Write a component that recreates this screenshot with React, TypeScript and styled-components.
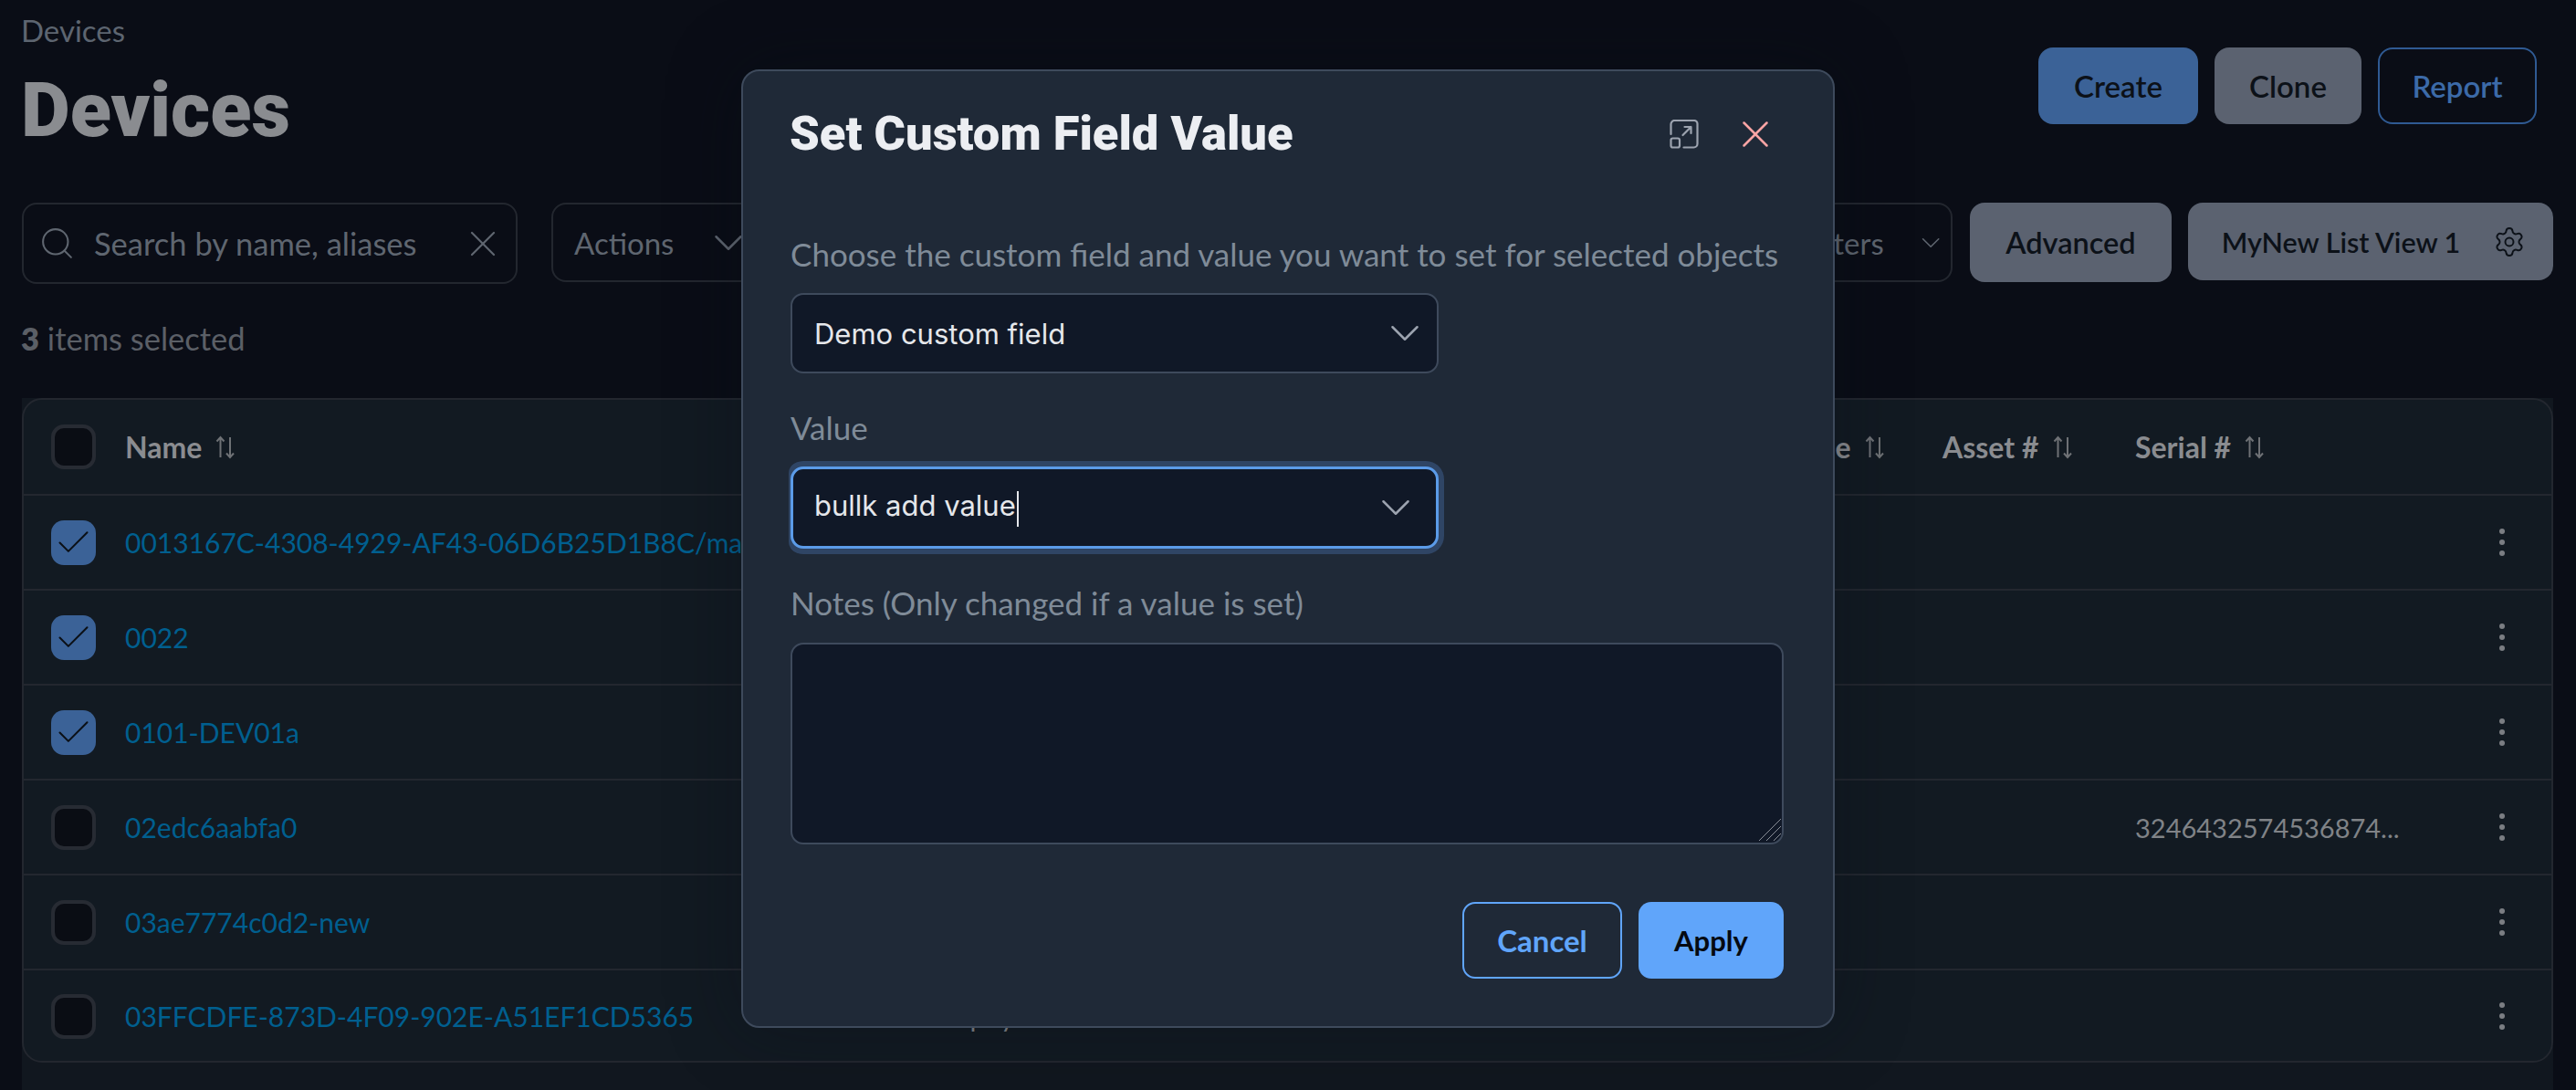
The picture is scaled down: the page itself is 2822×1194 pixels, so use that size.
import React from "react";
import styled, { createGlobalStyle } from "styled-components";
import { ChevronDown, Search, X, Settings, Check } from "lucide-react";

const Global = createGlobalStyle`
  html, body { margin: 0; padding: 0; height: 100%; background: #0a0d16; overflow: hidden; }
  body { font-family: "Inter", "Liberation Sans", sans-serif; }
  * { box-sizing: border-box; }
`;

const Page = styled.div`
  width: 2822px;
  height: 1194px;
  padding-left: 24px;
  padding-right: 25px;
  display: flex;
  flex-direction: column;
  position: relative;
  overflow: hidden;
  background: #0a0d16;
`;
const TopBar = styled.header`
  height: 222px;
  flex: none;
  display: flex;
  justify-content: space-between;
  align-items: flex-start;
`;
const TitleBlock = styled.div`
  display: flex;
  flex-direction: column;
`;
const Crumb = styled.div`
  font-family: "Lato", sans-serif;
  font-size: 33px;
  line-height: 36px;
  margin-top: 15px;
  margin-left: -1px;
  color: #5d6570;
`;
const PageTitle = styled.h1`
  font-family: "Roboto", sans-serif;
  font-weight: 900;
  font-size: 83px;
  line-height: 96px;
  margin: 22px 0 0 -1px;
  color: #8a8c90;
`;
const TopActions = styled.div`
  display: flex;
  gap: 18px;
  padding-top: 52px;
  padding-right: 18px;
`;
const TopButton = styled.button<{ $w: number; $kind: "primary" | "muted" | "outline" }>`
  width: ${(p) => p.$w}px;
  height: 84px;
  border-radius: 16px;
  font-family: "Lato", sans-serif;
  font-size: 33px;
  font-weight: 600;
  background: ${(p) => (p.$kind === "primary" ? "#3b6297" : p.$kind === "muted" ? "#5b6270" : "transparent")};
  color: ${(p) => (p.$kind === "outline" ? "#3c6aa8" : "#0c1118")};
  border: ${(p) => (p.$kind === "outline" ? "2px solid #2f5a93" : "none")};
`;
const Toolbar = styled.div`
  height: 89px;
  flex: none;
  display: flex;
  align-items: flex-start;
`;
const SearchBox = styled.div`
  width: 543px;
  height: 89px;
  border: 2px solid #23272f;
  border-radius: 16px;
  display: flex;
  align-items: center;
  padding: 0 12px 0 16px;
  color: #5f6670;
`;
const SearchText = styled.span`
  flex: 1;
  margin-left: 20px;
  font-family: "Lato", sans-serif;
  font-size: 34.5px;
  color: #5f6670;
  white-space: nowrap;
`;
const Dropdown = styled.div<{ $w: number }>`
  width: ${(p) => p.$w}px;
  height: 87px;
  border: 2px solid #23272f;
  border-radius: 16px;
  display: flex;
  align-items: center;
  padding: 0 5px 0 23px;
  font-family: "Lato", sans-serif;
  font-size: 33px;
  color: #5f6670;
`;
const ActionsBox = styled(Dropdown)`
  margin-left: 37px;
  gap: 33px;
`;
const FiltersBox = styled(Dropdown)`
  margin-left: auto;
  justify-content: flex-end;
  gap: 34px;
`;
const GrayButton = styled.button<{ $w: number; $h: number; $ml: number }>`
  width: ${(p) => p.$w}px;
  height: ${(p) => p.$h}px;
  margin-left: ${(p) => p.$ml}px;
  border: none;
  border-radius: 16px;
  background: #5b6270;
  color: #0c1118;
  font-family: "Lato", sans-serif;
  font-weight: 600;
  font-size: 32.5px;
  display: flex;
  align-items: center;
  justify-content: center;
  flex: none;
`;
const ViewButton = styled(GrayButton)`
  font-size: 30.5px;
  gap: 36px;
  padding-left: 13px;
`;
const Selected = styled.div`
  height: 125px;
  flex: none;
  padding-top: 40px;
  font-family: "Lato", sans-serif;
  font-size: 34.5px;
  line-height: 40px;
  color: #5b5f66;
  margin-left: -1px;
  b { font-weight: 800; }
`;
const Lower = styled.section`
  flex: 1;
  background: #11171f;
`;
const Table = styled.div`
  border: 2px solid #23272f;
  border-radius: 22px;
  background: #121a22;
  height: 728px;
  overflow: hidden;
`;
const Row = styled.div<{ $h: number; $last?: boolean }>`
  height: ${(p) => p.$h}px;
  display: grid;
  grid-template-columns: 81px 888px 934px 169px 211px 372px 60px;
  align-items: center;
  padding-left: 30px;
  border-bottom: ${(p) => (p.$last ? "none" : "2px solid #23272f")};
  font-family: "Lato", sans-serif;
  font-size: 30px;
  color: #808387;
`;
const Box = styled.div<{ $on?: boolean }>`
  width: 49px;
  height: 49px;
  border-radius: 14px;
  background: ${(p) => (p.$on ? "#3b6297" : "#0a0d14")};
  border: ${(p) => (p.$on ? "none" : "4px solid #272b33")};
  display: flex;
  align-items: center;
  justify-content: center;
  color: #0b1016;
`;
const HeadCell = styled.div`
  display: flex;
  align-items: center;
  gap: 15px;
  font-size: 32px;
  font-weight: 700;
  color: #8a8c90;
  white-space: nowrap;
`;
const NameLink = styled.div`
  color: #005f8f;
  white-space: nowrap;
`;
const Plain = styled.div`
  white-space: nowrap;
`;
const Serial = styled(Plain)`
  font-size: 29px;
`;
const Hidden = styled(Plain)`
  letter-spacing: 3px;
  margin-left: -10px;
`;
const Kebab = styled.div`
  justify-self: center;
  display: flex;
  flex-direction: column;
  gap: 6px;
  i {
    display: block;
    width: 6px;
    height: 6px;
    border-radius: 50%;
    background: #7b7e83;
  }
`;

const Layer = styled.div`
  position: absolute;
  inset: 0;
  display: flex;
  justify-content: center;
  align-items: flex-start;
  padding-top: 76px;
`;
const Modal = styled.div`
  width: 1198px;
  height: 1050px;
  background: #1f2937;
  border: 2px solid #3e4a5c;
  border-radius: 20px;
  padding: 0 54px 0 52px;
  display: flex;
  flex-direction: column;
  box-shadow: 0 0 80px rgba(10, 14, 22, 0.35);
`;
const ModalHead = styled.div`
  height: 118px;
  flex: none;
  padding-top: 20px;
  display: flex;
  align-items: center;
  justify-content: space-between;
`;
const ModalTitle = styled.h2`
  margin: -3px 0 0 -1px;
  font-family: "Roboto", sans-serif;
  font-weight: 900;
  font-size: 52.5px;
  color: #eceef2;
`;
const HeadIcons = styled.div`
  display: flex;
  align-items: center;
  gap: 37px;
  margin-right: 6px;
  color: #9ca3af;
`;
const Label = styled.div<{ $mt: number; $mb?: number }>`
  font-family: "Lato", sans-serif;
  font-size: 35px;
  line-height: 40px;
  color: #7f8b98;
  margin-top: ${(p) => p.$mt}px;
  margin-bottom: ${(p) => p.$mb ?? 0}px;
  white-space: nowrap;
`;
const SelectBox = styled.div<{ $focus?: boolean }>`
  width: 710px;
  height: ${(p) => (p.$focus ? 90 : 88)}px;
  flex: none;
  background: #101827;
  border: ${(p) => (p.$focus ? "3px solid #5b9be8" : "2px solid #3e4a5c")};
  border-radius: 14px;
  display: flex;
  align-items: center;
  justify-content: space-between;
  padding: 0 ${(p) => (p.$focus ? 17 : 8)}px 0 ${(p) => (p.$focus ? 23 : 24)}px;
  font-family: "Inter", sans-serif;
  font-size: 31px;
  color: #e5e7eb;
  margin-top: ${(p) => (p.$focus ? 21 : 23)}px;
  ${(p) => (p.$focus ? "box-shadow: 0 0 0 6px #2f4565; clip-path: inset(-6px -6px -6px -2px round 14px);" : "")}
`;
const Caret = styled.span`
  display: inline-block;
  width: 2px;
  height: 39px;
  background: #e5e7eb;
  vertical-align: middle;
  margin-left: 1px;
`;
const NotesWrap = styled.div`
  position: relative;
  width: 1088px;
  height: 221px;
  margin-top: 22px;
  flex: none;
`;
const Notes = styled.textarea`
  display: block;
  width: 100%;
  height: 100%;
  background: #101827;
  border: 2px solid #3e4a5c;
  border-radius: 14px;
  outline: none;
  resize: none;
`;
const Grip = styled.svg`
  position: absolute;
  right: 2px;
  bottom: 3px;
`;
const Footer = styled.div`
  display: flex;
  justify-content: flex-end;
  gap: 18px;
  margin-top: 63px;
  width: 1088px;
`;
const FootButton = styled.button<{ $w: number; $solid?: boolean }>`
  width: ${(p) => p.$w}px;
  height: 84px;
  border-radius: 14px;
  font-family: "Lato", sans-serif;
  font-weight: 700;
  font-size: ${(p) => (p.$solid ? 31 : 33)}px;
  background: ${(p) => (p.$solid ? "#60a5fa" : "transparent")};
  color: ${(p) => (p.$solid ? "#050a12" : "#60a5fa")};
  border: ${(p) => (p.$solid ? "none" : "2px solid #60a5fa")};
`;

const Sort = () => (
  <svg width="22" height="26" viewBox="0 0 22 26" fill="none" stroke="#6e7175" strokeWidth="2">
    <path d="M5.500 24V2M1.500 6.500L5.500 2L9.500 6.500" />
    <path d="M16 2V24M12 19.500L16 24L20 19.500" />
  </svg>
);
const Expand = () => (
  <svg width="32" height="32" viewBox="0 0 32 32" fill="none" stroke="#9ca3af" strokeWidth="2.200" strokeLinecap="round" strokeLinejoin="round">
    <path d="M1.500 16V5a4 4 0 0 1 4-4H27a3.500 3.500 0 0 1 3.500 3.500V26.500a4 4 0 0 1-4 4H15.500" />
    <rect x="1.500" y="20.500" width="9.500" height="10" rx="2" />
    <path d="M14.500 17L23.500 8M16.500 8H23.500V15" />
  </svg>
);
const Dots = () => (
  <Kebab>
    <i />
    <i />
    <i />
  </Kebab>
);

const rows = [
  { name: "0013167C-4308-4929-AF43-06D6B25D1B8C/macbook-pro", on: true },
  { name: "0022", on: true },
  { name: "0101-DEV01a", on: true },
  { name: "02edc6aabfa0", on: false, serial: "3246432574536874..." },
  { name: "03ae7774c0d2-new", on: false },
  { name: "03FFCDFE-873D-4F09-902E-A51EF1CD5365", on: false, mid: "Empty" },
];

export default function App() {
  return (
    <Page>
      <Global />
      <TopBar>
        <TitleBlock>
          <Crumb>Devices</Crumb>
          <PageTitle>Devices</PageTitle>
        </TitleBlock>
        <TopActions>
          <TopButton $w={175} $kind="primary">Create</TopButton>
          <TopButton $w={161} $kind="muted">Clone</TopButton>
          <TopButton $w={174} $kind="outline">Report</TopButton>
        </TopActions>
      </TopBar>
      <Toolbar>
        <SearchBox>
          <Search size={41} strokeWidth={1.2} />
          <SearchText>Search by name, aliases</SearchText>
          <X size={48} strokeWidth={1.1} />
        </SearchBox>
        <ActionsBox $w={300}>
          Actions
          <ChevronDown size={54} strokeWidth={1.1} />
        </ActionsBox>
        <FiltersBox $w={190}>
          Filters
          <ChevronDown size={54} strokeWidth={1.1} />
        </FiltersBox>
        <GrayButton $w={221} $h={87} $ml={19}>Advanced</GrayButton>
        <ViewButton $w={400} $h={85} $ml={18}>
          MyNew List View 1
          <Settings size={36} strokeWidth={1.3} />
        </ViewButton>
      </Toolbar>
      <Selected>
        <b>3</b> items selected
      </Selected>
      <Lower>
        <Table>
          <Row $h={105}>
            <Box />
            <HeadCell>Name <Sort /></HeadCell>
            <span />
            <HeadCell>Type <Sort /></HeadCell>
            <HeadCell>Asset # <Sort /></HeadCell>
            <HeadCell>Serial # <Sort /></HeadCell>
            <span />
          </Row>
          {rows.map((r, i) => (
            <Row key={r.name} $h={i === rows.length - 1 ? 100 : 104} $last={i === rows.length - 1}>
              <Box $on={r.on}>{r.on && <Check size={45} strokeWidth={1.1} />}</Box>
              <NameLink>{r.name}</NameLink>
              <Hidden>{r.mid}</Hidden>
              <span />
              <span />
              <Serial>{r.serial}</Serial>
              <Dots />
            </Row>
          ))}
        </Table>
      </Lower>
      <Layer>
        <Modal>
          <ModalHead>
            <ModalTitle>Set Custom Field Value</ModalTitle>
            <HeadIcons>
              <Expand />
              <X size={50} strokeWidth={1.2} color="#fca5a5" />
            </HeadIcons>
          </ModalHead>
          <Label $mt={62}>Choose the custom field and value you want to set for selected objects</Label>
          <SelectBox>
            Demo custom field
            <ChevronDown size={54} strokeWidth={1.1} color="#9ca3af" />
          </SelectBox>
          <Label $mt={39} $mb={2}>Value</Label>
          <SelectBox $focus>
            <span>bullk add value<Caret /></span>
            <ChevronDown size={54} strokeWidth={1.1} color="#9ca3af" />
          </SelectBox>
          <Label $mt={39} $mb={2}>Notes (Only changed if a value is set)</Label>
          <NotesWrap>
            <Notes />
            <Grip width="26" height="26" viewBox="0 0 26 26" fill="none" stroke="#8a8f98" strokeWidth="1">
              <path d="M1 25L25 1M9 25L25 9M17 25L25 17" />
            </Grip>
          </NotesWrap>
          <Footer>
            <FootButton $w={175}>Cancel</FootButton>
            <FootButton $w={159} $solid>Apply</FootButton>
          </Footer>
        </Modal>
      </Layer>
    </Page>
  );
}
